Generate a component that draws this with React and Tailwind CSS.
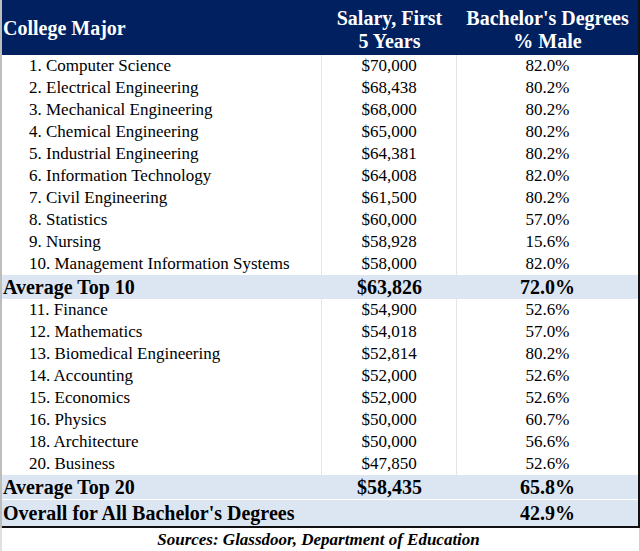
import React from "react";

const top10 = [
  ["1. Computer Science", "$70,000", "82.0%"],
  ["2. Electrical Engineering", "$68,438", "80.2%"],
  ["3. Mechanical Engineering", "$68,000", "80.2%"],
  ["4. Chemical Engineering", "$65,000", "80.2%"],
  ["5. Industrial Engineering", "$64,381", "80.2%"],
  ["6. Information Technology", "$64,008", "82.0%"],
  ["7. Civil Engineering", "$61,500", "80.2%"],
  ["8. Statistics", "$60,000", "57.0%"],
  ["9. Nursing", "$58,928", "15.6%"],
  ["10. Management Information Systems", "$58,000", "82.0%"],
];
const top20 = [
  ["11. Finance", "$54,900", "52.6%"],
  ["12. Mathematics", "$54,018", "57.0%"],
  ["13. Biomedical Engineering", "$52,814", "80.2%"],
  ["14. Accounting", "$52,000", "52.6%"],
  ["15. Economics", "$52,000", "52.6%"],
  ["16. Physics", "$50,000", "60.7%"],
  ["18. Architecture", "$50,000", "56.6%"],
  ["20. Business", "$47,850", "52.6%"],
];

function Row({ r }) {
  return (
    <div className="grid grid-cols-[320px_135px_1fr] h-[22px] text-[17px] leading-[22px] text-black bg-white">
      <div className="pl-[27px] border-b border-[#e4e4e4] border-r whitespace-nowrap">{r[0]}</div>
      <div className="text-center border-b border-r border-[#e4e4e4]">{r[1]}</div>
      <div className="text-center border-b border-[#e4e4e4]">{r[2]}</div>
    </div>
  );
}

function Avg({ label, sal, pct, h = "h-[24px] leading-[24px]" }) {
  return (
    <div className={`grid grid-cols-[320px_135px_1fr] ${h} text-[20px] font-bold text-black bg-[#dce6f2]`}>
      <div className="pl-[1px] whitespace-nowrap">{label}</div>
      <div className="text-center">{sal}</div>
      <div className="text-center">{pct}</div>
    </div>
  );
}

export default function App() {
  return (
    <div
      className="w-[640px] h-[551px] bg-white overflow-hidden flex flex-col"
      style={{ fontFamily: '"Liberation Serif", "Times New Roman", serif' }}
    >
      <div className="flex flex-col border-l-2 border-l-[#bdbdbd] border-r-2 border-r-[#111]">
        <div className="grid grid-cols-[320px_135px_1fr] h-[55px] bg-[#002060] text-white font-bold text-[20px] leading-[23px]">
          <div className="flex items-center pl-[1px] pt-[2px]">College Major</div>
          <div className="flex flex-col items-center justify-center pt-[4px]">
            <span>Salary, First</span>
            <span>5 Years</span>
          </div>
          <div className="flex flex-col items-center justify-center pt-[4px]">
            <span>Bachelor's Degrees</span>
            <span>% Male</span>
          </div>
        </div>
        {top10.map((r) => (
          <Row key={r[0]} r={r} />
        ))}
        <Avg label="Average Top 10" sal="$63,826" pct="72.0%" />
        {top20.map((r) => (
          <Row key={r[0]} r={r} />
        ))}
        <Avg label="Average Top 20" sal="$58,435" pct="65.8%" />
        <div className="h-[1px] bg-white" />
        <div className="border-b-2 border-b-[#111]">
          <Avg label="Overall for All Bachelor's Degrees" sal="" pct="42.9%" h="h-[26px] leading-[26px]" />
        </div>
      </div>
      <div className="h-[23px] flex items-center justify-center italic font-bold text-[17px] text-black border-r border-r-[#d0d0d0] border-l-2 border-l-[#e0e0e0] pr-[4px]">
        Sources: Glassdoor, Department of Education
      </div>
    </div>
  );
}
